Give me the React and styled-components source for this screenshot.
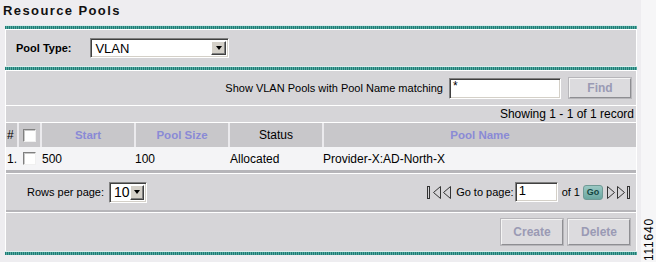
import React from "react";
import styled, { createGlobalStyle } from "styled-components";

const Global = createGlobalStyle`
  html, body { margin: 0; padding: 0; background: #f4f3f5; }
  body { font-family: "Liberation Sans", Arial, sans-serif; font-size: 11px; color: #000; }
`;

const Page = styled.div`
  width: 656px;
  height: 262px;
  display: flex;
  overflow: hidden;
`;

const Main = styled.div`
  width: 641px;
  background: #eeedf0;
  display: flex;
  flex-direction: column;
`;

const Side = styled.div`
  flex: 1;
  background: #f6f6f7;
  display: flex;
  flex-direction: column;
  justify-content: flex-end;
  align-items: center;
  padding-bottom: 1px;
`;

const FigureId = styled.div`
  writing-mode: vertical-rl;
  transform: rotate(180deg);
  font-size: 12px;
  letter-spacing: 0.8px;
  line-height: 12px;
`;

const Title = styled.div`
  height: 25px;
  padding-left: 3px;
  font-size: 13px;
  font-weight: bold;
  letter-spacing: 1.4px;
  line-height: 21px;
  color: #111;
`;

const Panel = styled.div`
  margin-left: 5px;
  width: 632px;
  display: flex;
  flex-direction: column;
`;

const TealRule = styled.div`
  height: 3px;
  border-top: 1px solid #dceeed;
  border-bottom: 1px solid ${(p) => (p.$bottom ? "#eeedf0" : "#ffffff")};
  background: repeating-linear-gradient(90deg, #1f7d76 0 1px, #58aaa2 1px 2px);
`;

const Bar = styled.div`
  background: #d6d5d8;
  border-left: 1px solid #ffffff;
  border-right: 1px solid #ffffff;
  height: ${(p) => p.$h}px;
  display: flex;
  align-items: center;
  justify-content: ${(p) => p.$justify || "flex-start"};
  padding: 0 ${(p) => p.$pr || 0}px 0 ${(p) => p.$pl || 0}px;
  gap: ${(p) => p.$gap || 0}px;
  box-sizing: border-box;
`;

const Line = styled.div`
  height: ${(p) => p.$h || 1}px;
  background: ${(p) => p.$c || "#ffffff"};
  border-left: 1px solid #ffffff;
  border-right: 1px solid #ffffff;
`;

const Label = styled.span`
  font-weight: ${(p) => (p.$bold ? "bold" : "normal")};
  font-size: ${(p) => p.$size || 11}px;
  white-space: nowrap;
`;

const SelectBox = styled.div`
  width: ${(p) => p.$w}px;
  height: ${(p) => p.$h}px;
  box-sizing: border-box;
  background: #fff;
  border: 1px solid;
  border-color: #808080 #ffffff #ffffff #808080;
  box-shadow: inset 1px 1px 0 #404040, inset -1px -1px 0 #d4d0c8;
  display: flex;
  align-items: center;
  padding: 2px;
`;

const SelectText = styled.div`
  flex: 1;
  font-size: ${(p) => p.$size}px;
  padding-left: 2px;
  line-height: 1;
`;

const ArrowBtn = styled.div`
  width: 15px;
  height: 100%;
  box-sizing: border-box;
  background: #d4d0c8;
  border: 1px solid;
  border-color: #ffffff #404040 #404040 #ffffff;
  box-shadow: inset -1px -1px 0 #808080;
  display: flex;
  align-items: center;
  justify-content: center;
`;

const DownTri = styled.div`
  width: 0;
  height: 0;
  border-left: 3.5px solid transparent;
  border-right: 3.5px solid transparent;
  border-top: 4px solid #000;
`;

const TextInput = styled.div`
  width: ${(p) => p.$w}px;
  height: ${(p) => p.$h}px;
  box-sizing: border-box;
  background: #fff;
  border: 1px solid;
  border-color: #808080 #ffffff #ffffff #808080;
  box-shadow: inset 1px 1px 0 #404040, inset -1px -1px 0 #d4d0c8;
  font-size: ${(p) => p.$size || 12}px;
  padding: ${(p) => p.$pt || 2}px 3px 0;
  line-height: 1;
`;

const Button = styled.div`
  width: 62px;
  height: ${(p) => p.$h}px;
  box-sizing: border-box;
  background: #dcdbde;
  border: 1px solid;
  border-color: #f4f4f4 #8e8e92 #8e8e92 #f4f4f4;
  box-shadow: 0 0 0 1px #b7b6ba;
  color: #9a9ab4;
  font-weight: bold;
  font-size: 12px;
  display: flex;
  align-items: center;
  justify-content: center;
`;

const Grid = styled.div`
  display: grid;
  grid-template-columns: 11px 23px 94px 94px 94px 1fr;
  border-left: 1px solid #ffffff;
  border-right: 1px solid #ffffff;
  height: ${(p) => p.$h}px;
  background: ${(p) => (p.$head ? "#c8c7ca" : "#f4f4f6")};
`;

const HeadCell = styled.div`
  display: flex;
  align-items: center;
  justify-content: ${(p) => (p.$left ? "flex-start" : "center")};
  padding-left: ${(p) => p.$pl || 0}px;
  border-left: ${(p) => (p.$first ? "none" : "2px solid #ebeaed")};
  font-size: ${(p) => (p.$sort ? 11.5 : 12)}px;
  font-weight: ${(p) => (p.$sort ? "bold" : "normal")};
  color: ${(p) => (p.$sort ? "#8a8ad6" : "#000")};
  box-sizing: border-box;
`;

const Cell = styled.div`
  display: flex;
  align-items: center;
  padding-left: ${(p) => p.$pl || 1}px;
  font-size: 12px;
  white-space: nowrap;
`;

const Check = styled.div`
  width: 13px;
  height: 13px;
  box-sizing: border-box;
  background: #fff;
  border: 1px solid;
  border-color: #808080 #f0f0f0 #f0f0f0 #808080;
  box-shadow: inset 1px 1px 0 #c8c8c8;
`;

const Showing = styled.div`
  height: 16px;
  background: #d6d5d8;
  border-left: 1px solid #ffffff;
  border-right: 1px solid #ffffff;
  text-align: right;
  padding-right: 2px;
  font-size: 12px;
  line-height: 17px;
`;

const Nav = styled.div`
  display: flex;
  align-items: center;
  gap: ${(p) => p.$gap || 0}px;
`;

const GoBtn = styled.div`
  width: 20px;
  height: 15px;
  box-sizing: border-box;
  border-radius: 3px;
  border: 1px solid #6f9a96;
  background: linear-gradient(#9ac8c3, #6aa6a0);
  color: #144642;
  font-size: 9px;
  font-weight: bold;
  display: flex;
  align-items: center;
  justify-content: center;
  margin: 0 3px 0 3px;
`;

const NavIcon = ({ dir, bar }) => {
  const w = bar ? 16 : 10;
  return (
    <svg width={w} height="15" viewBox={`0 0 ${w} 15`} style={{ display: "block" }}>
      {dir === "left" ? (
        <g fill="none" stroke="#333" strokeWidth="1">
          {bar && <rect x="1.5" y="1.5" width="2" height="12" />}
          <polygon points={`${w - 1.5},1.5 ${w - 8.5},7.5 ${w - 1.5},13.5`} />
        </g>
      ) : (
        <g fill="none" stroke="#333" strokeWidth="1">
          <polygon points="1.5,1.5 8.5,7.5 1.5,13.5" />
          {bar && <rect x={w - 4.5} y="1.5" width="2" height="12" />}
        </g>
      )}
    </svg>
  );
};

export default function App() {
  return (
    <>
      <Global />
      <Page>
        <Main>
          <Title>Resource Pools</Title>
          <Panel>
            <TealRule />
            <Bar $h={36} $pl={10} $gap={19}>
              <Label $bold>Pool Type:</Label>
              <SelectBox $w={139} $h={20}>
                <SelectText $size={13}>VLAN</SelectText>
                <ArrowBtn><DownTri /></ArrowBtn>
              </SelectBox>
            </Bar>
            <TealRule />
            <Bar $h={34} $justify="flex-end" $pr={5} $gap={0}>
              <Label $size={11} style={{ marginRight: 6 }}>Show VLAN Pools with Pool Name matching</Label>
              <TextInput $w={112} $h={21} $size={12} $pt={1}>*</TextInput>
              <Button $h={20} style={{ marginLeft: 8 }}>Find</Button>
            </Bar>
            <Line />
            <Showing>Showing 1 - 1 of 1 record</Showing>
            <Line />
            <Grid $head $h={24}>
              <HeadCell $first $left $pl={1} $sort={false}>#</HeadCell>
              <HeadCell $left $pl={4}><Check /></HeadCell>
              <HeadCell $sort>Start</HeadCell>
              <HeadCell $sort>Pool Size</HeadCell>
              <HeadCell>Status</HeadCell>
              <HeadCell $sort>Pool Name</HeadCell>
            </Grid>
            <Grid $h={23}>
              <Cell $pl={0}>1.</Cell>
              <Cell $pl={6}><Check /></Cell>
              <Cell $pl={2}>500</Cell>
              <Cell $pl={1}>100</Cell>
              <Cell $pl={2}>Allocated</Cell>
              <Cell $pl={1}>Provider-X:AD-North-X</Cell>
            </Grid>
            <Line $h={3} $c="#b6b5b9" />
            <Line />
            <Bar $h={36} $justify="space-between" $pl={21} $pr={4}>
              <Nav $gap={5}>
                <Label $size={11}>Rows per page:</Label>
                <SelectBox $w={38} $h={21}>
                  <SelectText $size={14}>10</SelectText>
                  <ArrowBtn><DownTri /></ArrowBtn>
                </SelectBox>
              </Nav>
              <Nav>
                <NavIcon dir="left" bar />
                <NavIcon dir="left" />
                <Label $size={11} style={{ margin: "0 1px 0 4px" }}>Go to page:</Label>
                <TextInput $w={43} $h={20} $size={13} $pt={1}>1</TextInput>
                <Label $size={11} style={{ marginLeft: 4 }}>of 1</Label>
                <GoBtn>Go</GoBtn>
                <NavIcon dir="right" />
                <NavIcon dir="right" bar />
              </Nav>
            </Bar>
            <Line $h={2} $c="#b6b5b9" />
            <Line />
            <Bar $h={38} $justify="flex-end" $pr={6} $gap={5}>
              <Button $h={26}>Create</Button>
              <Button $h={26}>Delete</Button>
            </Bar>
            <TealRule $bottom />
          </Panel>
        </Main>
        <Side>
          <FigureId>111640</FigureId>
        </Side>
      </Page>
    </>
  );
}
